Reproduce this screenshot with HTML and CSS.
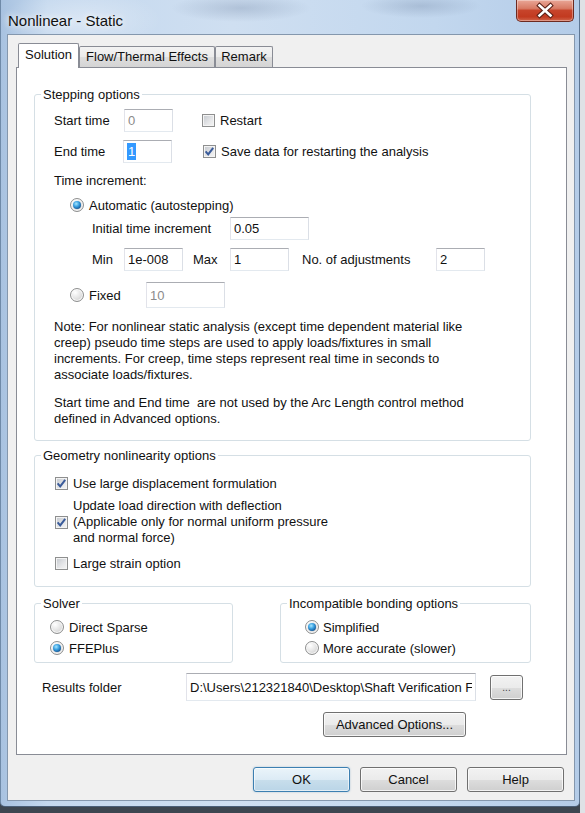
FILE: index.html
```html
<!DOCTYPE html>
<html lang="en">
<head>
    <meta charset="UTF-8">
    <title>Nonlinear - Static</title>
    <link rel="stylesheet" href="styles.css">
</head>
<body>
    <div class="window">
        <div class="titlebar">
            <span class="title">Nonlinear - Static</span>
            <button class="close-btn" aria-label="Close">
                <svg width="58" height="21" viewBox="0 0 58 21">
                    <path d="M23.5 5.5 L34.5 15.5 M34.5 5.5 L23.5 15.5" stroke="#5b2016" stroke-width="4.6" stroke-linecap="square"/>
                    <path d="M23.5 5.5 L34.5 15.5 M34.5 5.5 L23.5 15.5" stroke="#fff" stroke-width="2.6" stroke-linecap="square"/>
                </svg>
            </button>
        </div>

        <div class="client">
            <div class="tabs">
                <div class="tab active w-sol">Solution</div>
                <div class="tab w-flow">Flow/Thermal Effects</div>
                <div class="tab w-rem">Remark</div>
            </div>

            <div class="panel">
                <!-- Stepping options -->
                <fieldset class="group g-full">
                    <legend>Stepping options</legend>
                    <div class="group-body stepping">
                        <div class="row h23">
                            <span class="lbl w70">Start time</span>
                            <input class="field w49" value="0" disabled>
                            <label class="check ml29"><span class="box"></span>Restart</label>
                        </div>
                        <div class="row h23 mt8">
                            <span class="lbl w69">End time</span>
                            <div class="field w49"><span class="sel">1</span></div>
                            <label class="check ml31"><span class="box"><svg viewBox="0 0 13 13"><path d="M2.6 6.4 L5.2 9.4 L10.2 2.8" class="tick"/></svg></span>Save data for restarting the analysis</label>
                        </div>
                        <div class="row h16 mt9">Time increment:</div>
                        <div class="row h16 mt9 ml16">
                            <label class="opt"><span class="radio on"><span class="dot"></span></span>Automatic (autostepping)</label>
                        </div>
                        <div class="row h23 mt4 ml38">
                            <span class="lbl w138">Initial time increment</span>
                            <input class="field w79" value="0.05">
                        </div>
                        <div class="row h23 mt8 ml38">
                            <span class="lbl w32">Min</span>
                            <input class="field w59" value="1e-008">
                            <span class="lbl w37 ml10">Max</span>
                            <input class="field w59" value="1">
                            <span class="lbl w134 ml13">No. of adjustments</span>
                            <input class="field w49" value="2">
                        </div>
                        <div class="row h26 mt11 ml16">
                            <label class="opt w76"><span class="radio"></span>Fixed</label>
                            <input class="field w79 h26" value="10" disabled>
                        </div>
                        <p class="note mt11">Note: For nonlinear static analysis (except time dependent material like<br>creep) pseudo time steps are used to apply loads/fixtures in small<br>increments. For creep, time steps represent real time in seconds to<br>associate loads/fixtures.</p>
                        <p class="note mt12">Start time and End time&nbsp; are not used by the Arc Length control method<br>defined in Advanced options.</p>
                    </div>
                </fieldset>

                <!-- Geometry nonlinearity options -->
                <fieldset class="group g-full mt7">
                    <legend>Geometry nonlinearity options</legend>
                    <div class="group-body geometry">
                        <div class="row h16">
                            <label class="check"><span class="box"><svg viewBox="0 0 13 13"><path d="M2.6 6.4 L5.2 9.4 L10.2 2.8" class="tick"/></svg></span>Use large displacement formulation</label>
                        </div>
                        <div class="row mt7">
                            <label class="check"><span class="box"><svg viewBox="0 0 13 13"><path d="M2.6 6.4 L5.2 9.4 L10.2 2.8" class="tick"/></svg></span><span class="multi">Update load direction with deflection<br>(Applicable only for normal uniform pressure<br>and normal force)</span></label>
                        </div>
                        <div class="row h16 mt9">
                            <label class="check"><span class="box"></span>Large strain option</label>
                        </div>
                    </div>
                </fieldset>

                <div class="pair">
                    <fieldset class="group g-solver">
                        <legend>Solver</legend>
                        <div class="group-body radios pl15">
                            <label class="opt h16"><span class="radio"></span>Direct Sparse</label>
                            <label class="opt h16 mt5"><span class="radio on"><span class="dot"></span></span>FFEPlus</label>
                        </div>
                    </fieldset>
                    <fieldset class="group g-bond">
                        <legend>Incompatible bonding options</legend>
                        <div class="group-body radios pl24">
                            <label class="opt opt-tight h16"><span class="radio on"><span class="dot"></span></span>Simplified</label>
                            <label class="opt opt-tight h16 mt5"><span class="radio"></span>More accurate (slower)</label>
                        </div>
                    </fieldset>
                </div>

                <div class="row results">
                    <span class="lbl w144 ml8">Results folder</span>
                    <input class="field w290 h28" value="D:\Users\212321840\Desktop\Shaft Verification F">
                    <button class="btn browse">...</button>
                </div>
                <div class="row mt11">
                    <button class="btn advanced">Advanced Options...</button>
                </div>
            </div>

            <div class="actions">
                <button class="btn default">OK</button>
                <button class="btn">Cancel</button>
                <button class="btn">Help</button>
            </div>
        </div>
    </div>
</body>
</html>
```

FILE: styles.css
```css
html, body {
    margin: 0;
    padding: 0;
}

body {
    width: 585px;
    height: 813px;
    overflow: hidden;
    background: linear-gradient(to right, #3d4650 0, #3d4650 580px, #dfe2e6 580px);
    font-family: "Liberation Sans", Arial, sans-serif;
    font-size: 13px;
    color: #111;
}

/* Aero glass frame */
.window {
    width: 580px;
    height: 807px;
    box-sizing: border-box;
    display: flex;
    flex-direction: column;
    border-left: 1px solid #6f8aa8;
    border-right: 1px solid #5d7592;
    border-bottom: 1px solid #4a5f78;
    border-radius: 0 0 5px 5px;
    background:
        radial-gradient(ellipse 70px 14px at 240px 8px, rgba(120, 140, 170, 0.35), transparent),
        radial-gradient(ellipse 60px 12px at 420px 6px, rgba(120, 140, 170, 0.35), transparent),
        radial-gradient(ellipse 80px 30px at 80px 20px, rgba(255, 255, 255, 0.35), transparent),
        linear-gradient(to right, #a8c2e0 0, #c4d8ee 8%, #cfdff1 40%, #c2d7ee 75%, #b4cce8 100%);
}

.titlebar {
    height: 34px;
    display: flex;
    justify-content: space-between;
    align-items: flex-start;
    padding: 0 5px 0 7px;
}

.title {
    font-size: 15px;
    line-height: 15px;
    margin-top: 13px;
    text-shadow: 0 0 6px rgba(255, 255, 255, 0.9), 0 0 10px rgba(255, 255, 255, 0.7);
}

.close-btn {
    width: 58px;
    height: 22px;
    padding: 0;
    border: 1px solid #6d2a20;
    border-top: none;
    border-radius: 0 0 5px 5px;
    background: linear-gradient(#e9a797 0, #d87a64 40%, #c7442b 50%, #c23a20 80%, #d0654b 100%);
    box-shadow: inset 0 0 0 1px rgba(255, 255, 255, 0.35);
}

.close-btn svg {
    display: block;
    margin: -1px 0 0 -1px;
}

.client {
    flex: 1;
    margin: 0 4px 5px 6px;
    padding: 8px 7px 0 8px;
    border: 1px solid #8497ad;
    background: #f0f0f0;
}

/* Tabs */
.tabs {
    display: flex;
    align-items: flex-end;
    height: 24px;
    padding-left: 2px;
}

.tab {
    box-sizing: border-box;
    height: 21px;
    line-height: 20px;
    text-align: center;
    border: 1px solid #898c95;
    border-bottom: none;
    border-radius: 2px 2px 0 0;
    background: linear-gradient(#f3f3f3 0, #ebebeb 50%, #dedede 51%, #d4d4d4 100%);
}

.tab.active {
    height: 25px;
    line-height: 22px;
    margin-bottom: -1px;
    background: #fff;
    position: relative;
    z-index: 1;
}

.w-sol { width: 61px; }
.w-flow { width: 136px; }
.w-rem { width: 58px; }

.panel {
    height: 688px;
    box-sizing: border-box;
    border: 1px solid #898c95;
    background: #fff;
    padding: 19px 0 0 17px;
}

/* Group boxes */
.group {
    margin: 0;
    padding: 0;
    min-width: 0;
    box-sizing: border-box;
    border: 1px solid #d5dfe5;
    border-radius: 3px;
}

.group legend {
    margin-left: 6px;
    padding: 0 2px;
    line-height: 15px;
}

.g-full { width: 497px; }
.g-solver { width: 199px; }
.g-bond { width: 251px; }

.stepping { padding: 7px 0 13px 19px; }
.geometry { padding: 12px 0 15px 20px; }
.radios {
    display: flex;
    flex-direction: column;
    padding-top: 8px;
    padding-bottom: 6px;
}

.pair {
    display: flex;
    gap: 47px;
    margin-top: 9px;
}

.row {
    display: flex;
    align-items: center;
}

.results { margin-top: 10px; }

.lbl { flex: none; }

.note {
    margin-bottom: 0;
    line-height: 16px;
}

/* Text fields */
.field {
    box-sizing: border-box;
    height: 23px;
    margin: 0;
    padding: 0 3px;
    border: 1px solid #abadb3;
    border-color: #abadb3 #dbdfe6 #e3e9ef #e2e3ea;
    background: #fff;
    font-family: inherit;
    font-size: 13px;
    color: #111;
    display: flex;
    align-items: center;
}

.field:disabled {
    color: #8b8b8b;
    background: #fff;
}

.sel {
    background: #3399ff;
    color: #fff;
    padding: 0 1px;
    line-height: 17px;
}

/* Checkboxes and radio buttons */
.check, .opt {
    display: flex;
    align-items: center;
    gap: 5px;
}

.box {
    flex: none;
    width: 13px;
    height: 13px;
    box-sizing: border-box;
    border: 1px solid #8e8f8f;
    background: linear-gradient(135deg, #c3c7cd 0, #e6e7e9 60%, #f5f5f5 100%);
    box-shadow: inset 0 0 0 1px #f4f4f4;
}

.box svg {
    display: block;
    width: 13px;
    height: 13px;
    margin: -1px;
}

.tick {
    fill: none;
    stroke: #3a5b9a;
    stroke-width: 2;
}

.radio {
    flex: none;
    width: 14px;
    height: 14px;
    box-sizing: border-box;
    border-radius: 50%;
    border: 1px solid #8e8f8f;
    background: radial-gradient(circle at 35% 30%, #ffffff 0, #e4e4e4 50%, #c4c4c4 100%);
    box-shadow: inset 0 0 0 1px rgba(255, 255, 255, 0.8);
    display: flex;
    align-items: center;
    justify-content: center;
}

.dot {
    width: 8px;
    height: 8px;
    border-radius: 50%;
    background: radial-gradient(circle at 40% 35%, #a6e6ff 0, #3aa0e0 40%, #12508f 80%, #0b3467 100%);
}

.opt-tight { gap: 4px; }

.multi { line-height: 16px; }

/* Buttons */
.btn {
    box-sizing: border-box;
    height: 25px;
    margin: 0;
    padding: 0;
    border: 1px solid #707070;
    border-radius: 3px;
    background: linear-gradient(#f2f2f2 0, #ebebeb 50%, #dddddd 51%, #cfcfcf 100%);
    box-shadow: inset 0 0 0 1px rgba(255, 255, 255, 0.75);
    font-family: inherit;
    font-size: 13px;
    color: #111;
}

.btn.default {
    border-color: #3c7fb1;
    background: linear-gradient(#eaf4fa 0, #dcebf5 50%, #c8deec 51%, #bad5e7 100%);
    box-shadow: inset 0 0 0 1px rgba(255, 255, 255, 0.6), 0 0 2px rgba(60, 127, 177, 0.4);
}

.browse {
    width: 33px;
    margin-left: 14px;
    font-size: 10px;
    color: #444;
}

.advanced {
    width: 143px;
    margin-left: 289px;
}

.actions {
    display: flex;
    justify-content: flex-end;
    gap: 10px;
    margin-top: 12px;
    padding-right: 3px;
}

.actions .btn { width: 97px; }

/* Sizing helpers */
.h16 { height: 16px; }
.h23 { height: 23px; }
.h26 { height: 26px; }
.h28 { height: 28px; }

.w32 { width: 32px; }
.w37 { width: 37px; }
.w49 { width: 49px; }
.w59 { width: 59px; }
.w69 { width: 69px; }
.w70 { width: 70px; }
.w76 { width: 76px; }
.w79 { width: 79px; }
.w134 { width: 134px; }
.w138 { width: 138px; }
.w144 { width: 144px; }
.w290 { width: 290px; }

.ml8 { margin-left: 8px; }
.ml10 { margin-left: 10px; }
.ml13 { margin-left: 13px; }
.ml16 { margin-left: 16px; }
.ml29 { margin-left: 29px; }
.ml31 { margin-left: 31px; }
.ml38 { margin-left: 38px; }
.pl15 { padding-left: 15px; }
.pl24 { padding-left: 24px; }

.mt4 { margin-top: 4px; }
.mt5 { margin-top: 5px; }
.mt7 { margin-top: 7px; }
.mt8 { margin-top: 8px; }
.mt9 { margin-top: 9px; }
.mt11 { margin-top: 11px; }
.mt12 { margin-top: 12px; }
```
